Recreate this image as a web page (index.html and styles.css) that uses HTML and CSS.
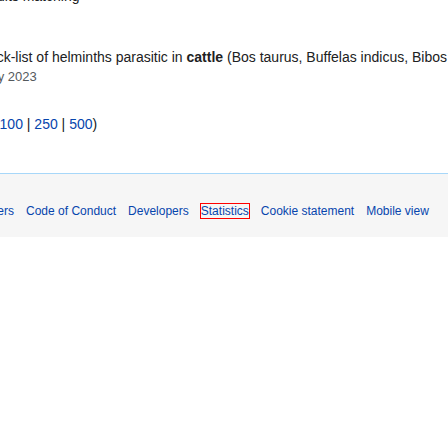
FILE: index.html
```html
<!DOCTYPE html>
<html lang="en">
<head>
<meta charset="utf-8">
<title>Search results</title>
<link rel="stylesheet" href="styles.css">
</head>
<body>
<div class="page">
  <div class="top-cut">ults matching</div>
  <div class="content">
    <div class="snippet">Check-list of helminths parasitic in <b>cattle</b> (Bos taurus, Buffelas indicus, Bibos frontalis)</div>
    <div class="result-data">January 2023</div>
    <div class="view-nav">View (previous 20 | next 20) (<a href="#">20</a> | <a href="#">50</a> | <a href="#">100</a> | <a href="#">250</a> | <a href="#">500</a>)</div>
  </div>
  <footer class="footer">
    <ul class="footer-links">
      <li><a href="#">Disclaimers</a></li>
      <li><a href="#">Code of Conduct</a></li>
      <li><a href="#">Developers</a></li>
      <li><a href="#" class="marked">Statistics</a></li>
      <li><a href="#">Cookie statement</a></li>
      <li><a href="#">Mobile view</a></li>
    </ul>
  </footer>
</div>
</body>
</html>
```
FILE: styles.css
```css
html, body {
  margin: 0;
  padding: 0;
  background: #ffffff;
  overflow: hidden;
}
body {
  font-family: "Liberation Sans", Arial, sans-serif;
  color: #202122;
  width: 448px;
  height: 448px;
}
.page {
  white-space: nowrap;
}
.top-cut {
  font-size: 14px;
  line-height: 17px;
  height: 17px;
  margin-top: -12px;
  margin-left: -3px;
  color: #202122;
}
.content {
  padding-top: 42px;
}
.snippet {
  font-size: 14px;
  line-height: 20px;
  margin-left: -29px;
}
.snippet b {
  font-weight: bold;
}
.result-data {
  font-size: 13px;
  line-height: 19px;
  color: #54595d;
  margin-left: -42px;
}
.view-nav {
  font-size: 14px;
  line-height: 20px;
  margin-top: 28px;
  margin-left: -236px;
}
a {
  color: #0645ad;
  text-decoration: none;
}
.footer {
  margin-top: 39px;
  border-top: 1px solid #a7d7f9;
  background: #f6f6f6;
  padding: 29px 0 18px;
}
.footer-links {
  list-style: none;
  margin: 0 0 0 -48px;
  padding: 0;
  display: flex;
  gap: 12px;
  font-size: 12px;
  line-height: 16px;
}
.marked {
  outline: 1px solid #ff0000;
}
```
